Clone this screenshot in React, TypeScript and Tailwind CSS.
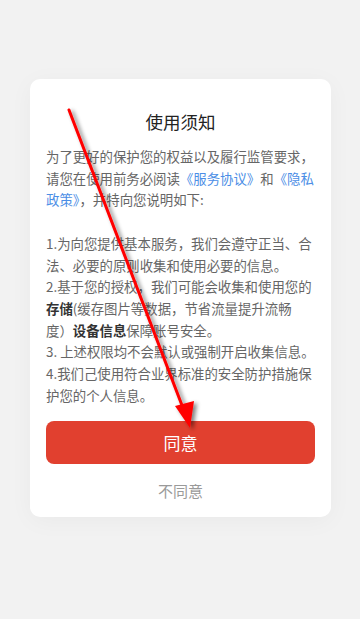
import React from 'react';

const Link: React.FC<{ children: React.ReactNode }> = ({ children }) => (
  <span className="text-[#4b8ee6]">{children}</span>
);

const B: React.FC<{ children: React.ReactNode }> = ({ children }) => (
  <span className="font-semibold text-[#333333]">{children}</span>
);

const lines: React.ReactNode[] = [
  <>为了更好的保护您的权益以及履行监管要求，</>,
  <>请您在使用前务必阅读<Link>《服务协议》</Link>和<Link>《隐私</Link></>,
  <><Link>政策》</Link>，并特向您说明如下:</>,
  <>&nbsp;</>,
  <>1.为向您提供基本服务，我们会遵守正当、合</>,
  <>法、必要的原则收集和使用必要的信息。</>,
  <>2.基于您的授权，我们可能会收集和使用您的</>,
  <><B>存储</B>(缓存图片等数据，节省流量提升流畅</>,
  <>度）<B>设备信息</B>保障账号安全。</>,
  <>3. 上述权限均不会默认或强制开启收集信息。</>,
  <>4.我们己使用符合业界标准的安全防护措施保</>,
  <>护您的个人信息。</>,
];

export default function App() {
  return (
    <div
      className="relative w-[360px] h-[619px] overflow-hidden bg-[#f2f2f2] pt-[79px]"
      style={{ fontFamily: '"Noto Sans CJK SC", "Noto Sans", sans-serif' }}
    >
      {/* Dialog */}
      <div className="mx-[30px] w-[301px] rounded-[10px] bg-white px-4 pt-[31px] pb-4 shadow-[0_4px_24px_rgba(0,0,0,0.04)]">
        <h1 className="text-center text-[17.5px] leading-[24px] text-[#222222]">使用须知</h1>

        <div className="mt-[12px] text-[13.4px] leading-[21.7px] text-[#666666]">
          {lines.map((l, i) => (
            <div key={i} className="whitespace-nowrap">{l}</div>
          ))}
        </div>

        <button className="mt-[15px] flex h-[43px] w-full items-center justify-center rounded-[8px] bg-[#e1402f] text-[17px] text-white">
          同意
        </button>

        <div className="mt-[17px] text-center text-[15px] leading-[20px] text-[#9a9a9a]">不同意</div>
      </div>

      {/* Annotation arrow overlay */}
      <svg className="pointer-events-none absolute inset-0" width="360" height="619" viewBox="0 0 360 619">
        <defs>
          <filter id="sh" x="-20%" y="-20%" width="140%" height="140%">
            <feGaussianBlur in="SourceAlpha" stdDeviation="2" />
            <feOffset dx="3" dy="2" result="b" />
            <feComponentTransfer>
              <feFuncA type="linear" slope="0.5" />
            </feComponentTransfer>
            <feMerge>
              <feMergeNode />
              <feMergeNode in="SourceGraphic" />
            </feMerge>
          </filter>
        </defs>
        <g filter="url(#sh)">
          <line x1="69" y1="110" x2="183" y2="408" stroke="#ff0000" strokeWidth="3" strokeLinecap="round" />
          <polygon points="190,428 175,406 194,401" fill="#ff0000" />
        </g>
      </svg>
    </div>
  );
}
